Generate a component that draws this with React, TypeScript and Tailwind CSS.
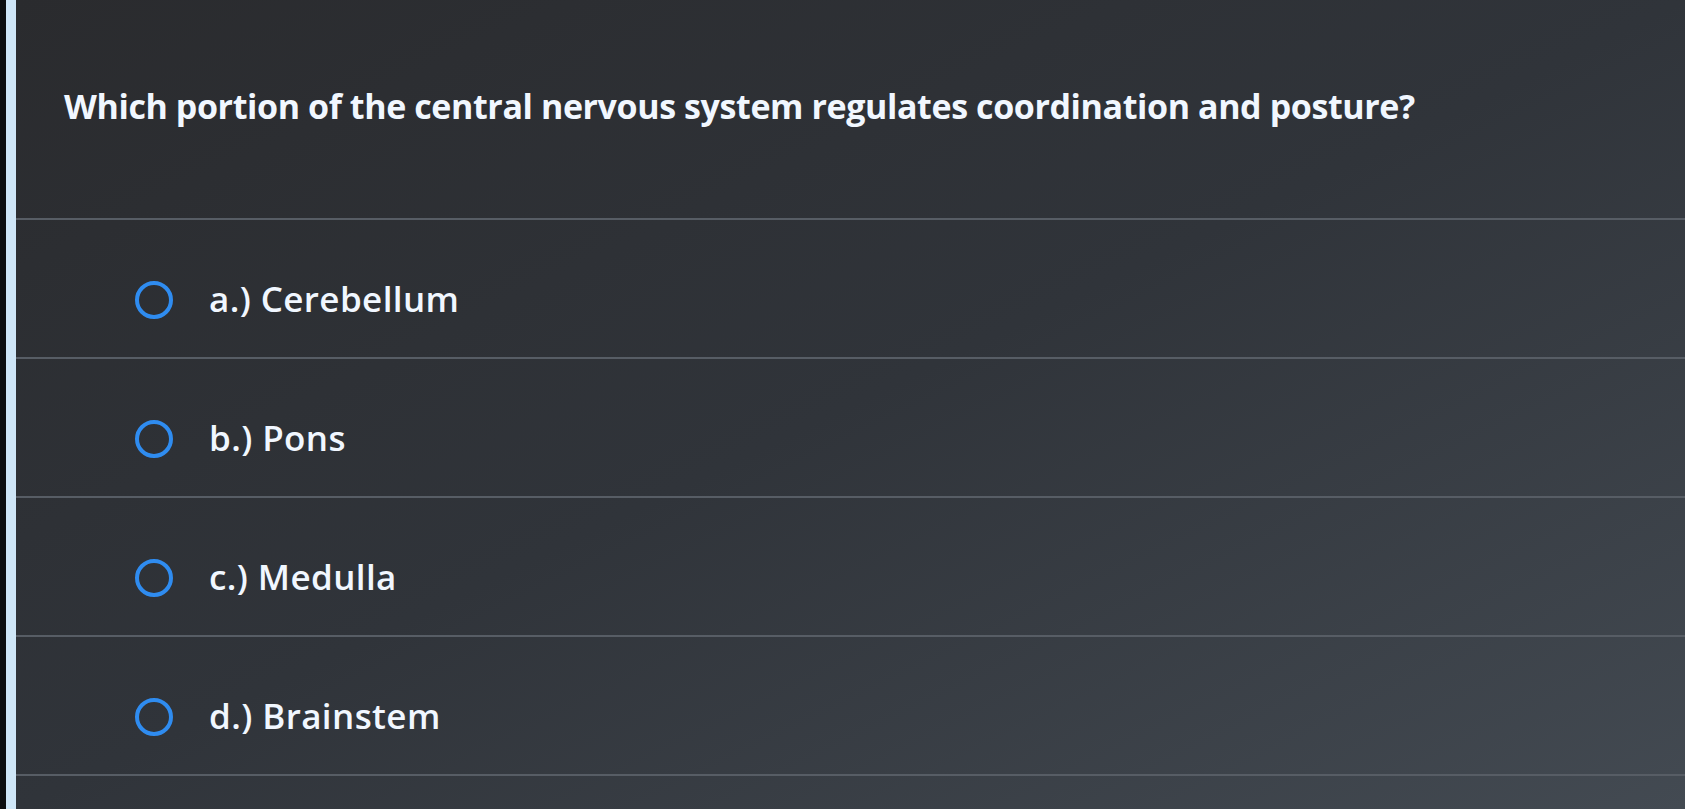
const options = [
    { id: "a", label: "Cerebellum" },
    { id: "b", label: "Pons" },
    { id: "c", label: "Medulla" },
    { id: "d", label: "Brainstem" },
];

export default function App() {
    return (
        <div className="flex h-[809px] w-[1685px] overflow-hidden bg-[#1a1b1d] font-['Open_Sans','Lato',sans-serif]">
            <div className="w-[6px] bg-[#0d0e10]" />
            <div className="w-[10px] bg-[#cfe6f7]" />
            <div className="flex flex-1 flex-col bg-linear-to-br from-[#2a2b2e] via-[#30343a] to-[#434a52]">
                <div className="flex h-[218px] items-start pl-[48px] pt-[81px]">
                    <h1 className="text-[34px] font-bold tracking-[-0.4px] text-[#f1f7ff]">
                        Which portion of the central nervous system regulates coordination and posture?
                    </h1>
                </div>
                {options.map((o) => (
                    <label
                        key={o.id}
                        className="flex h-[139px] cursor-pointer items-start border-t-2 border-[#575d65] pl-[119px] pt-[59px]"
                    >
                        <span className="mt-[2px] h-[38px] w-[38px] rounded-full border-[4px] border-[#2f8cf0]" />
                        <span className="ml-[36px] text-[35px] leading-[40px] font-semibold tracking-[0.4px] text-[#f1f7ff]">
                            {o.id}.) {o.label}
                        </span>
                    </label>
                ))}
                <div className="flex-1 border-t-2 border-[#575d65]" />
            </div>
        </div>
    );
}
